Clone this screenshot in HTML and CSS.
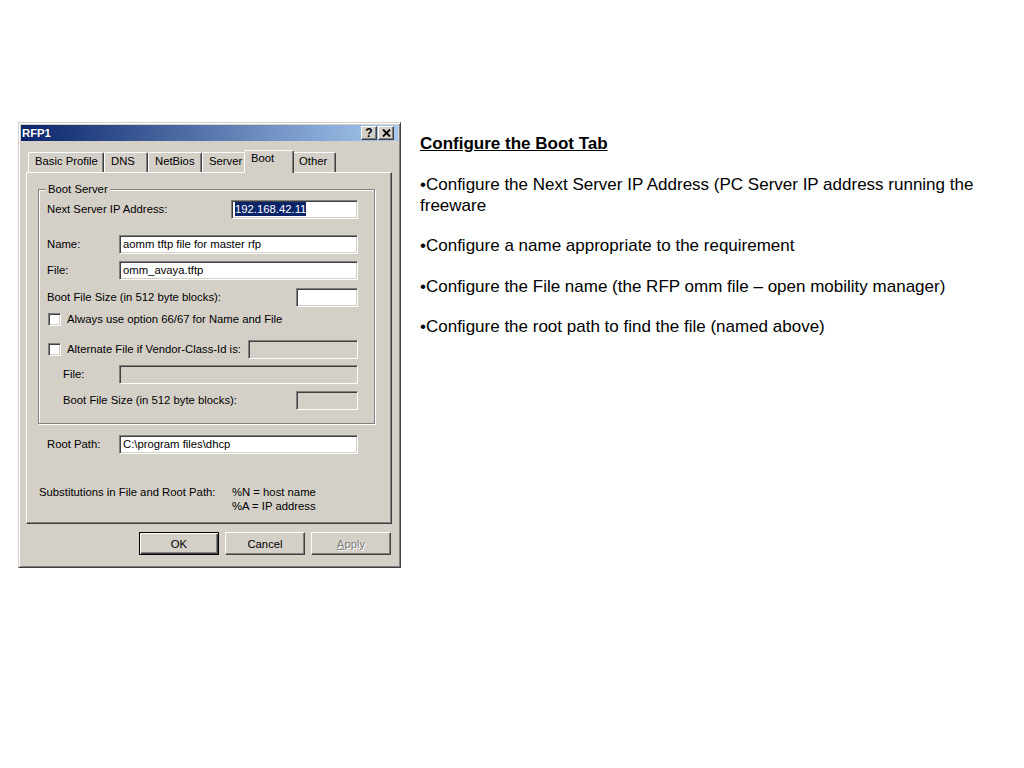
FILE: index.html
```html
<!doctype html>
<html lang="en">
<head>
	<meta charset="UTF-8">
	<title>RFP1 - Boot</title>
	<link rel="stylesheet" href="styles.css">
</head>
<body>
	<div class="page">
		<div class="dialog">
			<div class="titlebar">
				<span class="title">RFP1</span>
				<div class="tb-btns">
					<span class="tb-btn">?</span>
					<span class="tb-btn">
						<svg width="9" height="8" viewBox="0 0 9 8"><path d="M1 0.5 L8 7.5 M8 0.5 L1 7.5" stroke="#000" stroke-width="1.8" fill="none"/></svg>
					</span>
				</div>
			</div>

			<div class="tabs">
				<span class="tab tab-basic">Basic Profile</span>
				<span class="tab tab-dns">DNS</span>
				<span class="tab tab-netbios">NetBios</span>
				<span class="tab tab-server">Server</span>
				<span class="tab tab-boot active">Boot</span>
				<span class="tab tab-other">Other</span>
			</div>

			<div class="panel">
				<div class="group">
					<span class="legend">Boot Server</span>
					<div class="row r1">
						<span>Next Server IP Address:</span>
						<div class="field f-ip"><span class="sel">192.168.42.11</span></div>
					</div>
					<div class="row r2">
						<span>Name:</span>
						<div class="field f-wide">aomm tftp file for master rfp</div>
					</div>
					<div class="row r3">
						<span>File:</span>
						<div class="field f-wide">omm_avaya.tftp</div>
					</div>
					<div class="row r4">
						<span>Boot File Size (in 512 byte blocks):</span>
						<div class="field f-small"></div>
					</div>
					<div class="row r5">
						<span class="check"></span>
						<span>Always use option 66/67 for Name and File</span>
					</div>
					<div class="row r6">
						<span class="check"></span>
						<span>Alternate File if Vendor-Class-Id is:</span>
						<div class="field f-vendor off"></div>
					</div>
					<div class="row r7 sub">
						<span>File:</span>
						<div class="field f-wide off"></div>
					</div>
					<div class="row r8 sub">
						<span>Boot File Size (in 512 byte blocks):</span>
						<div class="field f-small off"></div>
					</div>
				</div>

				<div class="row root">
					<span>Root Path:</span>
					<div class="field f-wide">C:\program files\dhcp</div>
				</div>

				<div class="subst">
					<span class="subst-label">Substitutions in File and Root Path:</span>
					<span>%N = host name<br>%A = IP address</span>
				</div>
			</div>

			<div class="buttons">
				<span class="btn default">OK</span>
				<span class="btn">Cancel</span>
				<span class="btn disabled"><u>A</u>pply</span>
			</div>
		</div>

		<div class="notes">
			<p class="head">Configure the Boot Tab</p>
			<p>•Configure the Next Server IP Address (PC Server IP address running the freeware</p>
			<p>•Configure a name appropriate to the requirement</p>
			<p>•Configure the File name (the RFP omm file – open mobility manager)</p>
			<p>•Configure the root path to find the file (named above)</p>
		</div>
	</div>
</body>
</html>
```

FILE: styles.css
```css
body{
	margin: 0;
	background: #fff;
}
.page{
	display: flex;
	align-items: flex-start;
	padding: 122px 0 0 18px;
}

/* dialog window */
.dialog{
	box-sizing: border-box;
	width: 383px;
	height: 446px;
	padding: 2px 2px 0 2px;
	background: #d4d0c8;
	border: 1px solid;
	border-color: #d4d0c8 #404040 #404040 #d4d0c8;
	box-shadow: inset 1px 1px 0 #fff, inset -1px -1px 0 #808080;
	font-family: "Liberation Sans", Arial, sans-serif;
	font-size: 11.3px;
	color: #000;
}
.titlebar{
	height: 16px;
	display: flex;
	align-items: center;
	justify-content: space-between;
	padding: 0 4px 0 1px;
	background: linear-gradient(to right, #0a246a, #a6caf0);
}
.title{
	color: #fff;
	font-weight: bold;
}
.tb-btns{
	display: flex;
	gap: 1px;
}
.tb-btn{
	box-sizing: border-box;
	width: 16px;
	height: 14px;
	display: flex;
	align-items: center;
	justify-content: center;
	background: #d4d0c8;
	border: 1px solid;
	border-color: #fff #404040 #404040 #fff;
	box-shadow: inset -1px -1px 0 #808080;
	font-weight: bold;
	font-size: 12px;
	line-height: 12px;
}

/* tabs */
.tabs{
	display: flex;
	align-items: flex-end;
	height: 22px;
	margin-top: 9px;
	padding-left: 7px;
	position: relative;
	z-index: 1;
}
.tab{
	box-sizing: border-box;
	height: 20px;
	padding: 2px 0 0 6px;
	background: #d4d0c8;
	border-top: 1px solid #fff;
	border-left: 1px solid #fff;
	border-right: 1px solid #404040;
	box-shadow: inset -1px 0 0 #808080;
	border-radius: 2px 2px 0 0;
}
.tab-basic{ width: 76px; }
.tab-dns{ width: 44px; }
.tab-netbios{ width: 54px; }
.tab-server{ width: 44px; }
.tab-boot{ width: 50px; }
.tab-other{ width: 44px; }
.tab.active{
	height: 23px;
	margin: 0 -1px -1px -2px;
	padding-top: 1px;
	position: relative;
}
.tab-other{
	margin-left: -1px;
}

/* tab page */
.panel{
	box-sizing: border-box;
	width: 366px;
	height: 352px;
	margin-left: 5px;
	padding: 0 16px 0 11px;
	border: 1px solid;
	border-color: #fff #404040 #404040 #fff;
	box-shadow: inset -1px -1px 0 #808080;
}
.group{
	position: relative;
	margin-top: 16px;
	padding: 9px 16px 13px 8px;
	border: 1px solid #808080;
	box-shadow: inset 1px 1px 0 #fff, 1px 1px 0 #fff;
}
.legend{
	position: absolute;
	top: -7px;
	left: 7px;
	padding: 0 2px;
	line-height: 13px;
	background: #d4d0c8;
}
.row{
	display: flex;
	align-items: center;
	height: 20px;
}
.r2{ margin-top: 15px; }
.r3{ margin-top: 6px; }
.r4{ margin-top: 7px; }
.r5{ margin-top: 2px; }
.r6{ margin-top: 10px; }
.r7{ margin-top: 5px; }
.r8{ margin-top: 6px; }
.row.sub{
	padding-left: 16px;
}
.field{
	box-sizing: border-box;
	height: 19px;
	margin-left: auto;
	padding: 1px 2px 0 3px;
	line-height: 15px;
	background: #fff;
	border: 1px solid;
	border-color: #808080 #fff #fff #808080;
	box-shadow: inset 1px 1px 0 #404040, inset -1px -1px 0 #d4d0c8;
	white-space: nowrap;
}
.field.off{
	background: #d4d0c8;
}
.f-ip{ width: 127px; }
.f-wide{ width: 239px; }
.f-small{ width: 62px; }
.f-vendor{ width: 110px; }
.sel{
	background: #0a246a;
	color: #fff;
	padding: 1px 0;
}
.check{
	box-sizing: border-box;
	width: 13px;
	height: 13px;
	margin: 0 6px 0 1px;
	background: #fff;
	border: 1px solid;
	border-color: #808080 #fff #fff #808080;
	box-shadow: inset 1px 1px 0 #404040, inset -1px -1px 0 #d4d0c8;
}
.root{
	margin-top: 10px;
	padding: 0 17px 0 9px;
}
.subst{
	display: flex;
	margin-top: 31px;
	padding-left: 1px;
	line-height: 14px;
}
.subst-label{
	width: 193px;
}

/* buttons */
.buttons{
	display: flex;
	justify-content: flex-end;
	gap: 6px;
	margin-top: 8px;
	padding-right: 7px;
}
.btn{
	box-sizing: border-box;
	width: 80px;
	height: 23px;
	display: flex;
	align-items: center;
	justify-content: center;
	border: 1px solid;
	border-color: #fff #404040 #404040 #fff;
	box-shadow: inset -1px -1px 0 #808080;
}
.btn.default{
	border: 1px solid #000;
	box-shadow: inset 1px 1px 0 #fff, inset -1px -1px 0 #404040, inset -2px -2px 0 #808080;
}
.btn.disabled{
	color: #808080;
	text-shadow: 1px 1px 0 #fff;
}

/* notes on the right */
.notes{
	width: 580px;
	margin: 12px 0 0 19px;
	font-family: "Liberation Sans", Arial, sans-serif;
	font-size: 17px;
	line-height: 20.5px;
	color: #000;
}
.notes p{
	margin: 0 0 20px;
}
.notes .head{
	font-weight: bold;
	text-decoration: underline;
	margin-bottom: 20.5px;
}
```
